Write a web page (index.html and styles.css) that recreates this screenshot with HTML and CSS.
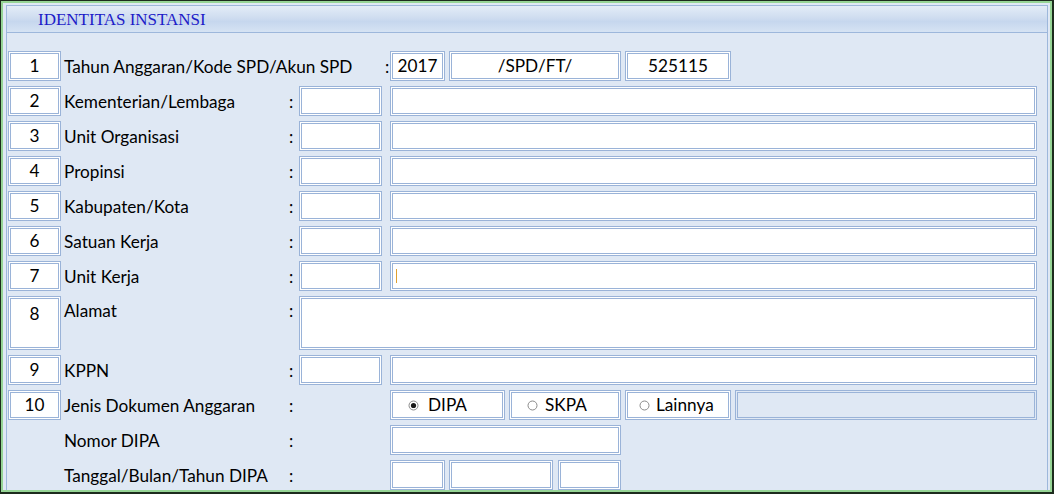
FILE: index.html
```html
<!DOCTYPE html>
<html>
<head>
<meta charset="utf-8">
<link rel="stylesheet" href="styles.css">
</head>
<body>
<div class="frame">
  <div class="panel">
    <div class="header">IDENTITAS INSTANSI</div>
    <div class="rows">
      <div class="row">
        <div class="box num">1</div>
        <div class="label label-wide">Tahun Anggaran/Kode SPD/Akun SPD</div>
        <div class="colon colon-short">:</div>
        <div class="box w-year">2017</div>
        <div class="box w-spd">/SPD/FT/</div>
        <div class="box w-akun">525115</div>
      </div>
      <div class="row">
        <div class="box num">2</div>
        <div class="label">Kementerian/Lembaga</div>
        <div class="colon">:</div>
        <div class="box code"></div>
        <div class="box name"></div>
      </div>
      <div class="row">
        <div class="box num">3</div>
        <div class="label">Unit Organisasi</div>
        <div class="colon">:</div>
        <div class="box code"></div>
        <div class="box name"></div>
      </div>
      <div class="row">
        <div class="box num">4</div>
        <div class="label">Propinsi</div>
        <div class="colon">:</div>
        <div class="box code"></div>
        <div class="box name"></div>
      </div>
      <div class="row">
        <div class="box num">5</div>
        <div class="label">Kabupaten/Kota</div>
        <div class="colon">:</div>
        <div class="box code"></div>
        <div class="box name"></div>
      </div>
      <div class="row">
        <div class="box num">6</div>
        <div class="label">Satuan Kerja</div>
        <div class="colon">:</div>
        <div class="box code"></div>
        <div class="box name"></div>
      </div>
      <div class="row">
        <div class="box num">7</div>
        <div class="label">Unit Kerja</div>
        <div class="colon">:</div>
        <div class="box code"></div>
        <div class="box name name-left"><span class="caret"></span></div>
      </div>
      <div class="row row-tall">
        <div class="box num">8</div>
        <div class="label">Alamat</div>
        <div class="colon">:</div>
        <div class="box address"></div>
      </div>
      <div class="row">
        <div class="box num">9</div>
        <div class="label">KPPN</div>
        <div class="colon">:</div>
        <div class="box code"></div>
        <div class="box name"></div>
      </div>
      <div class="row">
        <div class="box num">10</div>
        <div class="label">Jenis Dokumen Anggaran</div>
        <div class="colon">:</div>
        <div class="spacer"></div>
        <div class="box opt w-dipa">
          <svg class="radio" width="11" height="11" viewBox="0 0 11 11"><circle cx="5.5" cy="5.5" r="4.5" fill="#fff" stroke="#8a8a8a" stroke-width="1"/><circle cx="5.5" cy="5.5" r="2.6" fill="#1a1a1a"/></svg>
          <span>DIPA</span>
        </div>
        <div class="box opt w-skpa">
          <svg class="radio" width="11" height="11" viewBox="0 0 11 11"><circle cx="5.5" cy="5.5" r="4.5" fill="#fff" stroke="#8a8a8a" stroke-width="1"/></svg>
          <span>SKPA</span>
        </div>
        <div class="box opt w-lain">
          <svg class="radio" width="11" height="11" viewBox="0 0 11 11"><circle cx="5.5" cy="5.5" r="4.5" fill="#fff" stroke="#8a8a8a" stroke-width="1"/></svg>
          <span>Lainnya</span>
        </div>
        <div class="box empty"></div>
      </div>
      <div class="row">
        <div class="nonum"></div>
        <div class="label">Nomor DIPA</div>
        <div class="colon">:</div>
        <div class="spacer"></div>
        <div class="box w-nomor"></div>
      </div>
      <div class="row">
        <div class="nonum"></div>
        <div class="label">Tanggal/Bulan/Tahun DIPA</div>
        <div class="colon">:</div>
        <div class="spacer"></div>
        <div class="box w-year"></div>
        <div class="box w-bulan"></div>
        <div class="box w-tahun"></div>
      </div>
    </div>
  </div>
</div>
</body>
</html>
```

FILE: styles.css
```css
* { box-sizing: border-box; }
html, body { margin: 0; padding: 0; background: #ffffff; }
body {
  font-family: "Lato", "Liberation Sans", sans-serif;
  font-size: 17.2px;
  color: #000;
}
.frame {
  width: 1054px;
  height: 494px;
  border-style: solid;
  border-color: #1d2b1d;
  border-width: 1px 2px 2px 1px;
  box-shadow: inset 0 0 0 2px #96d596;
  background: #dfe8f4;
  padding: 4px 4px 2px 5px;
  display: flex;
}
.panel {
  flex: 1;
  border: 1px solid #9db7db;
  border-bottom: none;
  background: #dfe8f4;
  display: flex;
  flex-direction: column;
}
.header {
  height: 27px;
  border-bottom: 1px solid #9db7db;
  background: linear-gradient(#e3ecf7 0%, #cfddf0 45%, #c6d7ee 60%, #d6e3f3 100%);
  font-family: "Liberation Serif", serif;
  font-size: 17px;
  color: #1c1cc8;
  padding-left: 31px;
  line-height: 28px;
}
.rows {
  padding: 18px 10px 0 1px;
  display: flex;
  flex-direction: column;
  gap: 5px;
}
.row {
  display: flex;
  align-items: center;
  height: 30px;
}
.row-tall { height: 54px; align-items: flex-start; }
.box {
  height: 30px;
  border: 3px double #9ab3d8;
  background: #fff;
  display: flex;
  align-items: center;
  justify-content: center;
  line-height: 1;
}
.num { width: 53px; margin-right: 3px; }
.row-tall .num { height: 54px; align-items: flex-start; padding-top: 6px; }
.nonum { width: 56px; }
.label { width: 222px; }
.label-wide { width: 321px; }
.row-tall .label, .row-tall .colon { padding-top: 4px; }
.colon { width: 13px; padding-left: 3px; }
.colon-short { width: 5px; padding-left: 0; }
.code { width: 83px; margin-right: 8px; }
.name { flex: 1; }
.name-left { justify-content: flex-start; padding-left: 3px; }
.caret { width: 1px; height: 14px; background: #e0a030; }
.address { flex: 1; height: 54px; }
.spacer { width: 91px; }
.w-year { width: 55px; margin-right: 4px; }
.w-spd { width: 172px; margin-right: 4px; }
.w-akun { width: 106px; }
.opt { justify-content: flex-start; gap: 9px; }
.w-dipa { width: 115px; margin-right: 4px; padding-left: 15px; }
.w-skpa { width: 112px; margin-right: 4px; padding-left: 15px; gap: 7px; }
.w-lain { width: 106px; margin-right: 4px; padding-left: 11px; gap: 6px; }
.radio { display: block; flex: none; }
.empty { flex: 1; background: #dfe8f4; }
.w-nomor { width: 231px; }
.w-bulan { width: 104px; margin-right: 5px; }
.w-tahun { width: 63px; }
```
